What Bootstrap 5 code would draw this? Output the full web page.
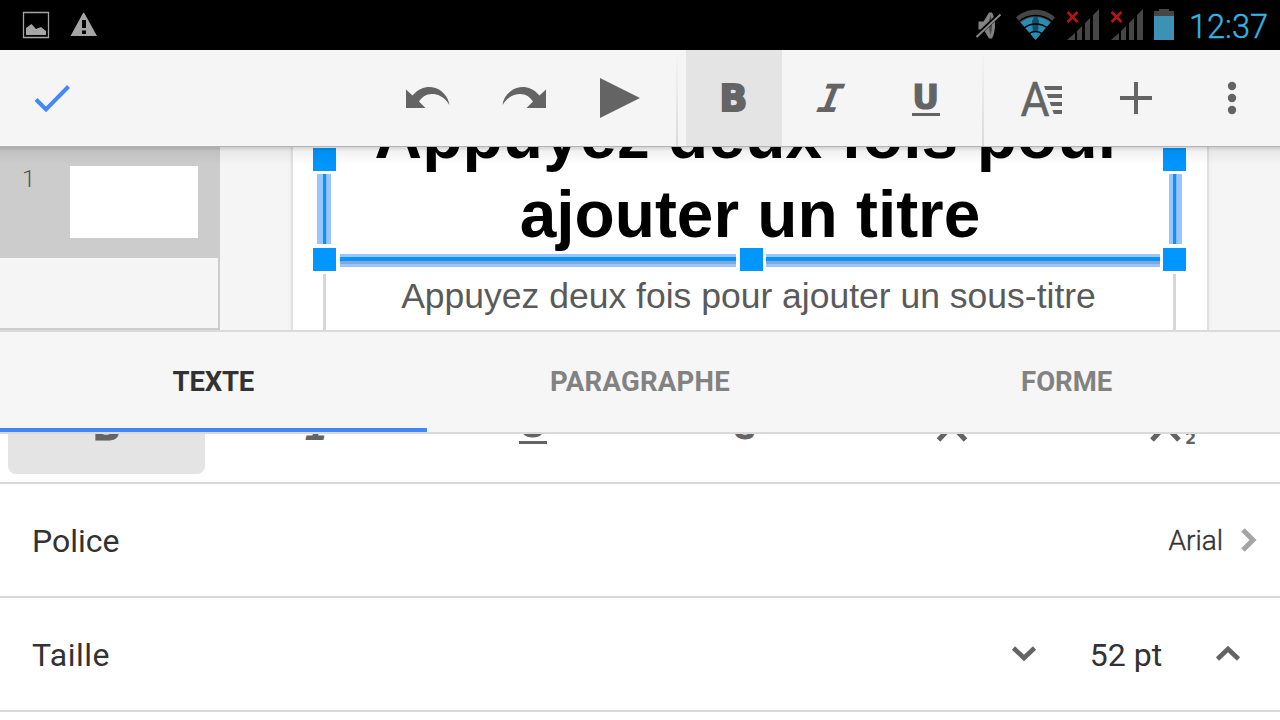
<!DOCTYPE html>
<html lang="fr">
<head>
<meta charset="utf-8">
<meta name="viewport" content="width=device-width, initial-scale=1">
<title>Présentation</title>
<link href="https://cdn.jsdelivr.net/npm/bootstrap@5.3.0/dist/css/bootstrap.min.css" rel="stylesheet">
<style>
  body { width: 1280px; height: 720px; overflow: hidden; font-family: Roboto, sans-serif; color: #323232; background: #fff; }
  svg { display: block; flex: none; }
  .statusbar { height: 50px; background: #000; }
  .clock { font-size: 32.5px; font-weight: 300; line-height: 50px; padding-top: 3px; color: #33b5e5; margin-left: 13px; width: 91px; white-space: nowrap; -webkit-text-stroke: .4px #33b5e5; }
  .toolbar { height: 97px; background: #f5f5f5; border-bottom: 1px solid #b4b4b4; }
  .tool { width: 96px; height: 96px; fill: #646464; }
  .tool.on { background: #e4e4e4; }
  .check-tool { margin-right: 284px; }
  .split { width: 2px; height: 96px; background: linear-gradient(#f5f5f5, #dadada); }
  .stage { height: 183px; background: #f5f5f5; }
  .stage::before { content: ""; position: absolute; z-index: 3; inset: 0 0 auto 0; height: 18px; background: linear-gradient(rgba(0,0,0,.17), rgba(0,0,0,.05) 25%, rgba(0,0,0,0)); }
  .filmstrip { width: 220px; border-right: 2px solid #ccc; border-bottom: 2px solid #ccc; }
  .film { height: 111px; width: 220px; background: #ccc; padding: 19px 0 0 22px; }
  .film-no { font-size: 24px; font-weight: 300; line-height: 26px; width: 48px; color: #555; }
  .thumb { width: 128px; height: 72px; background: #fff; }
  .slide-page { margin-left: 71px; width: 918px; background: #fff; border: 2px solid #e0e0e0; border-width: 0 2px; box-shadow: 0 0 5px rgba(0,0,0,.05); font-family: "Liberation Sans", sans-serif; }
  .slide-title { margin-top: -51px; font-size: 65.8px; line-height: 79.3px; font-weight: 700; color: #000; white-space: nowrap; font-kerning: none; }
  .slide-title span { letter-spacing: .15px; margin-left: -2px; }
  .slide-sub { margin-top: 19px; font-size: 35.5px; line-height: 44px; color: #5a5a5a; white-space: nowrap; padding-right: 3px; }
  .marquee { position: absolute; left: 0; top: 0; z-index: 1; }
  .tabs { height: 104px; background: #f6f6f6; border-top: 2px solid #dadada; border-bottom: 2px solid #dadada; }
  .tab { font-size: 27.5px; font-weight: 700; line-height: 100px; color: #828282; height: 100px; }
  .tab.on { color: #323232; box-shadow: inset 0 -4px #4387f8; letter-spacing: -.2px; }
  .tab.wide { letter-spacing: .25px; }
  .formats { height: 50px; border-bottom: 2px solid #dadada; }
  .fmt { height: 40px; margin: 0 8px; border-radius: 0 0 8px 8px; }
  .fmt.on { background: #e4e4e4; }
  .fmt svg { margin: 0 auto; fill: #646464; }
  .opt { height: 114px; border-bottom: 2px solid #dadada; padding: 2px 0 0 32px; font-size: 32px; }
  .opt svg { margin-top: -2px; }
  .taille { letter-spacing: .5px; }
  .points { width: 172px; }
  .font-name { font-size: 28px; font-weight: 300; -webkit-text-stroke: .4px #323232; }
</style>
</head>
<body>
<header class="statusbar d-flex align-items-center overflow-hidden">
  <svg width="110" height="50" fill="#a5a5a5">
    <path d="M23.500 12.500h25v25h-25z" fill="none" stroke="#a5a5a5" stroke-width="1.300"/>
    <path d="M26 35v-7l5.500-4 4.500 5 5-2 5 4v4z"/>
    <path fill-rule="evenodd" d="M84 12.500L97 36H70.500L82.800 13.500zM82 20v8h4v-8zM82 30.500v3.500h4v-3.500z"/>
  </svg>
  <svg class="ms-auto" width="206" height="50" viewBox="970 0 206 50">
    <path d="M978.500 21.500h5l5.500-9h3c4 8 4 18 0 26h-3l-5.500-9h-5z" fill="#828282"/>
    <path d="M990.500 15c2 6 2 14 0 20-2-6-2-14 0-20" fill="#484848"/>
    <path d="M975 37.500l25-23.500" stroke="#000" stroke-width="4"/>
    <path d="M976.500 37l24-22.500" stroke="#8c8c8c" stroke-width="1.800"/>
    <path d="M1035.500 40L1016 17.500C1027 7.300 1044 7.300 1055 17.500z" fill="#464646"/>
    <path d="M1035.500 40l-14.800-17.500c8-7 21.600-7 29.600 0z" fill="#288cb4"/>
    <path d="M1036 14l3 7-1 11h-5l-1-11z" fill="#164e66"/>
    <path d="M1019 21.500c9.500-8 23.500-8 33 0M1024 28c6.500-5.500 17-5.500 23.500 0M1028.500 34c4-3.500 10-3.500 14 0" fill="none" stroke="#000" stroke-width="1.500"/>
    <g fill="#464646">
      <path id="sig" d="M1067 40l8-7v7zM1077 40v-9l5-5v14zM1085 40V23l5-5v22zM1093 40V15l6-6v31z"/>
      <use href="#sig" x="44"/>
      <path d="M1154 40V11h5V9h10v2h5v29z"/>
    </g>
    <path d="M1067.500 12l10 10m0-10l-10 10M1111.500 12l10 10m0-10l-10 10" stroke="#b41414" stroke-width="2.600"/>
    <path d="M1154 16h20v24h-20z" fill="#3c91b4"/>
  </svg>
  <div class="clock">12:37</div>
</header>

<nav class="toolbar d-flex">
  <svg class="tool check-tool" viewBox="0 0 96 96"><path d="M36 49.500l10 10 22.500-23" fill="none" stroke="#4387f8" stroke-width="4"/></svg>
  <svg class="tool" viewBox="0 0 96 96"><path d="M26 39.500l6.500 6C41 35.500 52 35.500 59 39.500c6 4 9.500 9 10.500 15.500C64 46 57 44 52 44c-6 0-10 3-13 7.500l6.500 6.500H26z"/></svg>
  <svg class="tool" viewBox="0 0 96 96"><path d="M70 39.500l-6.500 6C55 35.500 44 35.500 37 39.500c-6 4-10 9-10.500 15.500C32 46 39 44 44 44c6 0 10 3 13 7.500L50.500 58H70z"/></svg>
  <svg class="tool" viewBox="0 0 96 96"><path d="M28 28l40 20-40 20z"/></svg>
  <div class="split ms-2 me-2"></div>
  <svg class="tool on" viewBox="0 0 96 96"><text x="33.500" y="61.200" font-family="DejaVu Sans" font-weight="700" font-size="36.500" stroke="#646464" stroke-width="2">B</text></svg>
  <svg class="tool" viewBox="0 0 96 96"><text x="50" y="62" transform="skewX(-12)" font-family="Liberation Mono" font-weight="700" font-style="italic" font-size="43" textLength="24" lengthAdjust="spacingAndGlyphs" dx="-3.500">I</text></svg>
  <svg class="tool" viewBox="0 0 96 96"><text x="34.200" y="58.500" font-family="DejaVu Sans" font-weight="700" font-size="33" stroke="#646464" stroke-width="1.200">U</text><path d="M34 63h28v3H34z"/></svg>
  <div class="split ms-2 me-2"></div>
  <svg class="tool" viewBox="0 0 96 96"><text x="28.500" y="66" font-family="Roboto" font-weight="400" font-size="47.500" textLength="29" lengthAdjust="spacingAndGlyphs" stroke="#646464" stroke-width=".5">A</text><path d="M52 36h18v4H53.500zM54.800 44H70v4H56.300zM57.600 52H70v4H59.100zM60.400 60H70v4h-8.100z"/></svg>
  <svg class="tool" viewBox="0 0 96 96"><path d="M46 32h4v14h14v4H50v14h-4V50H32v-4h14z"/></svg>
  <svg class="tool" viewBox="0 0 96 96"><circle cx="48" cy="36" r="4.200"/><circle cx="48" cy="48" r="4.200"/><circle cx="48" cy="60" r="4.200"/></svg>
</nav>

<main class="stage d-flex position-relative overflow-hidden">
  <aside class="filmstrip">
    <div class="film d-flex">
      <div class="film-no">1</div>
      <div class="thumb"></div>
    </div>
  </aside>
  <section class="slide-page position-relative text-center">
    <div class="slide-title"><span>Appuyez deux fois pour</span><br>ajouter un titre</div>
    <div class="slide-sub">Appuyez deux fois pour ajouter un sous-titre</div>
    <svg class="marquee" width="914" height="183" viewBox="293 147 914 183" shape-rendering="crispEdges">
      <path d="M323 274h3v56h-3zM1173 274h3v56h-3z" fill="#d7d7d7"/>
      <path d="M317 174h14v70h-14zM1169 174h13v70h-13zM340 254h396v13H340zM766 254h394v13H766z" fill="#9bc5ff"/>
      <path d="M340 261h396v3H340zM766 261h394v3H766z" fill="#86a6d3"/>
      <path d="M323 174h3v70h-3zM1173 174h3v70h-3zM340 257h396v4H340zM766 257h394v4H766z" fill="#0096ff"/>
      <path d="M326 174h1v70h-1zM1176 174h1v70h-1z" fill="#86b3ef"/>
      <path d="M313 148h23v23h-23zM1163 148h23v23h-23zM313 248h23v23h-23zM740 248h23v23h-23zM1163 248h23v23h-23z" fill="#0096ff"/>
    </svg>
  </section>
</main>

<nav class="tabs row g-0 text-center">
  <div class="tab col on">TEXTE</div>
  <div class="tab col wide">PARAGRAPHE</div>
  <div class="tab col">FORME</div>
</nav>

<section class="formats row g-0">
  <div class="col"><div class="fmt on"><svg width="60" height="40"><text x="15.500" y="5.500" font-family="DejaVu Sans" font-weight="700" font-size="37" stroke="#646464">B</text></svg></div></div>
  <div class="col"><div class="fmt"><svg width="60" height="40"><text x="14.500" y="6" font-family="Liberation Mono" font-weight="700" font-style="italic" font-size="40">I</text></svg></div></div>
  <div class="col"><div class="fmt"><svg width="60" height="40"><text x="15" y="2.500" font-family="DejaVu Sans" font-weight="700" font-size="36">U</text><path d="M16 7h28v3H16z"/></svg></div></div>
  <div class="col"><div class="fmt"><svg width="60" height="40"><text x="17" y="5" font-family="Roboto" font-weight="700" font-size="34" stroke="#646464">S</text></svg></div></div>
  <div class="col"><div class="fmt"><svg width="60" height="40"><path d="M8.500 6L35-22M35.500 6L9-22" stroke="#646464" stroke-width="5"/></svg></div></div>
  <div class="col"><div class="fmt"><svg width="60" height="40"><path d="M9 6L35-22M36 6L9-22" stroke="#646464" stroke-width="5"/><text x="42" y="10" font-family="DejaVu Sans" font-weight="700" font-size="16">2</text></svg></div></div>
</section>

<div class="opt d-flex align-items-center">
  <div>Police</div>
  <div class="font-name ms-auto">Arial</div>
  <svg width="57" height="32"><path d="M20 6l10 10-10 10" fill="none" stroke="#a5a5a5" stroke-width="5"/></svg>
</div>
<div class="opt d-flex align-items-center">
  <div class="taille">Taille</div>
  <svg class="ms-auto" width="32" height="32"><path d="M5.500 10L16 20l10.500-10" fill="none" stroke="#646464" stroke-width="4.600"/></svg>
  <div class="points text-center">52 pt</div>
  <svg width="68" height="32"><path d="M5.500 21L16 11l10.500 10" fill="none" stroke="#646464" stroke-width="4.600"/></svg>
</div>
<script src="https://cdn.jsdelivr.net/npm/bootstrap@5.3.0/dist/js/bootstrap.bundle.min.js"></script>
</body>
</html>
